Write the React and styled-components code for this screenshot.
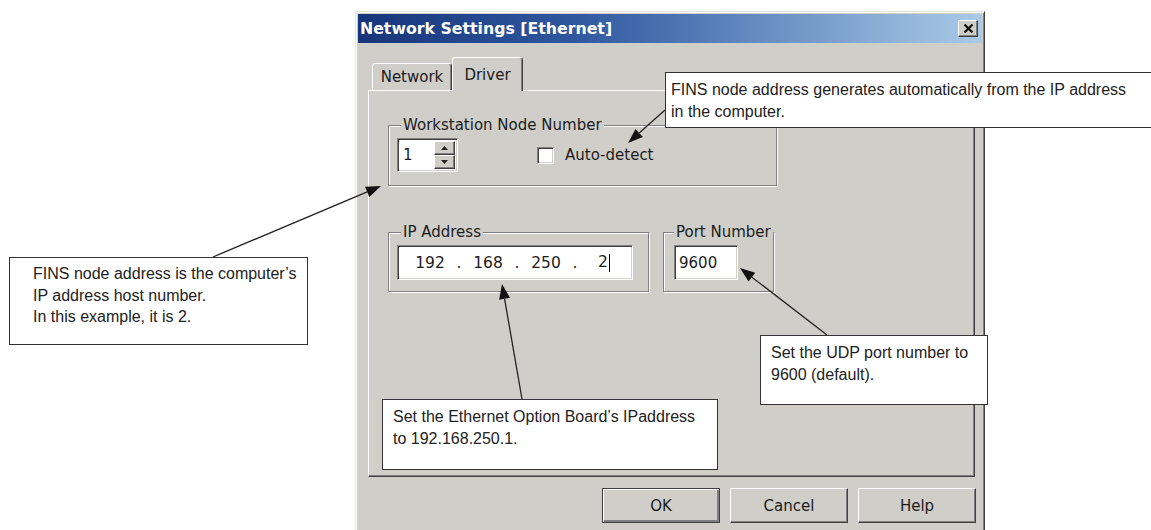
import React from 'react';
import styled, { createGlobalStyle } from 'styled-components';

const face = '#d0cec9';
const uiFont = `"DejaVu Sans", Tahoma, Verdana, sans-serif`;
const noteFont = `"Liberation Sans", Arial, Helvetica, sans-serif`;

const GlobalStyle = createGlobalStyle`
    html, body {
        margin: 0;
        padding: 0;
        background: #fff;
        overflow: hidden;
    }
    * {
        box-sizing: border-box;
    }
`;

const Page = styled.div`
    position: relative;
    width: 1151px;
    height: 530px;
    overflow: hidden;
    padding: 11px 0 0 355px;
    font-family: ${uiFont};
    color: #1c1c1c;
`;

const Dialog = styled.div`
    width: 630px;
    height: 545px;
    background: ${face};
    border: 1px solid;
    border-color: #e4e2de #404040 #404040 #e4e2de;
    box-shadow: inset 1px 1px 0 #fff, inset -1px -1px 0 #808080;
    padding: 2px;
    display: flex;
    flex-direction: column;
`;

const TitleBar = styled.div`
    height: 29px;
    flex-shrink: 0;
    display: flex;
    align-items: center;
    justify-content: space-between;
    padding: 0 4px 0 2px;
    background: linear-gradient(to right, #17357a 0%, #2f58a0 35%, #a9cbe8 100%);
    color: #fff;
    font-weight: bold;
    font-size: 15.75px;
`;

const CloseButton = styled.div`
    width: 20px;
    height: 17px;
    display: flex;
    align-items: center;
    justify-content: center;
    background: ${face};
    border: 1px solid;
    border-color: #fff #404040 #404040 #fff;
    box-shadow: inset -1px -1px 0 #808080;
`;

const Body = styled.div`
    padding: 14px 7px 0 10px;
    display: flex;
    flex-direction: column;
`;

const TabStrip = styled.div`
    display: flex;
    align-items: flex-end;
    height: 34px;
    padding-left: 4px;
    margin-bottom: -1px;
    position: relative;
    z-index: 1;
`;

const Tab = styled.div`
    width: ${p => p.$w}px;
    height: ${p => (p.$active ? 34 : 27)}px;
    margin-bottom: ${p => (p.$active ? 0 : 1)}px;
    display: flex;
    align-items: center;
    justify-content: center;
    font-size: 15px;
    background: ${face};
    border: 1px solid;
    border-color: #fff #404040 transparent #fff;
    border-bottom: none;
    border-radius: 3px 3px 0 0;
    box-shadow: inset -1px 0 0 #808080;
`;

const Panel = styled.div`
    width: 607px;
    height: 387px;
    border: 1px solid;
    border-color: #fff #404040 #404040 #fff;
    box-shadow: inset -1px -1px 0 #808080;
    padding: 25px 0 0 19px;
`;

const Group = styled.fieldset`
    margin: 0;
    min-width: 0;
    width: ${p => p.$w}px;
    border: 1px solid #808080;
    box-shadow: inset 1px 1px 0 #fff, 1px 1px 0 #fff;
    padding: 4px 8px ${p => p.$bottom}px ${p => p.$left}px;
`;

const Legend = styled.legend`
    margin-left: ${p => p.$shift}px;
    padding: 0 2px;
    background: ${face};
    font-size: 15px;
    line-height: 18px;
    white-space: nowrap;
`;

const Row = styled.div`
    display: flex;
    align-items: center;
`;

const FieldRow = styled.div`
    display: flex;
    align-items: flex-start;
    gap: 14px;
    margin-top: 37px;
`;

const Sunken = styled.div`
    width: ${p => p.$w}px;
    height: ${p => p.$h}px;
    background: #fff;
    border: 1px solid;
    border-color: #808080 #fff #fff #808080;
    box-shadow: inset 1px 1px 0 #404040, inset -1px -1px 0 #d4d0c8;
    display: flex;
    align-items: center;
    font-size: 15px;
`;

const SpinValue = styled.div`
    flex: 1;
    padding-left: 5px;
`;

const SpinColumn = styled.div`
    width: 23px;
    height: 100%;
    padding: 2px 2px 2px 0;
    display: flex;
    flex-direction: column;
`;

const SpinButton = styled.div`
    flex: 1;
    display: flex;
    align-items: center;
    justify-content: center;
    background: ${face};
    border: 1px solid;
    border-color: #fff #404040 #404040 #fff;
    box-shadow: inset -1px -1px 0 #808080;
`;

const CheckLabel = styled.label`
    display: flex;
    align-items: center;
    gap: 11px;
    margin-left: 79px;
    font-size: 15px;
`;

const CheckBox = styled.span`
    width: 17px;
    height: 17px;
    background: #fff;
    border: 1px solid;
    border-color: #808080 #fff #fff #808080;
    box-shadow: inset 1px 1px 0 #404040, inset -1px -1px 0 #d4d0c8;
`;

const IpLead = styled.span`
    width: 10px;
`;

const IpCell = styled.span`
    width: ${p => (p.$dot ? 14 : 44)}px;
    text-align: center;
    white-space: nowrap;
    font-size: 15.5px;
`;

const Caret = styled.span`
    display: inline-block;
    width: 1px;
    height: 18px;
    margin-left: 1px;
    background: #000;
    vertical-align: middle;
`;

const PortValue = styled.div`
    padding-left: 4px;
`;

const ButtonRow = styled.div`
    display: flex;
    justify-content: flex-end;
    gap: 10px;
    margin-top: 11px;
    width: 608px;
`;

const Button = styled.div`
    width: 118px;
    height: 35px;
    display: flex;
    align-items: center;
    justify-content: center;
    font-size: 15px;
    background: ${face};
    border: 1px solid;
    border-color: ${p => (p.$default ? '#404040' : '#fff #404040 #404040 #fff')};
    box-shadow: ${p =>
        p.$default
            ? 'inset 1px 1px 0 #fff, inset -2px -2px 0 #808080'
            : 'inset -1px -1px 0 #808080'};
`;

const Callout = styled.div`
    position: absolute;
    left: ${p => p.$x}px;
    top: ${p => p.$y}px;
    width: ${p => p.$w}px;
    height: ${p => p.$h}px;
    padding: ${p => p.$pad};
    background: #fff;
    border: 1.5px solid #333;
    font-family: ${noteFont};
    font-size: 16px;
    line-height: 21.5px;
    color: #222;
`;

const Overlay = styled.svg`
    position: absolute;
    left: 0;
    top: 0;
    pointer-events: none;
`;

const Arrow = ({ from, to }) => {
    const [x1, y1] = from;
    const [x2, y2] = to;
    const len = Math.hypot(x2 - x1, y2 - y1);
    const ux = (x2 - x1) / len;
    const uy = (y2 - y1) / len;
    const bx = x2 - ux * 15;
    const by = y2 - uy * 15;
    const hw = 5.5;
    const head = `${x2},${y2} ${bx - uy * hw},${by + ux * hw} ${bx + uy * hw},${by - ux * hw}`;
    return (
        <g>
            <line x1={x1} y1={y1} x2={bx} y2={by} stroke="#222" strokeWidth="1.3" />
            <polygon points={head} fill="#111" />
        </g>
    );
};

const Triangle = ({ down }) => (
    <svg width="7" height="4" viewBox="0 0 7 4">
        <polygon points={down ? '0,0 7,0 3.5,4' : '0,4 7,4 3.5,0'} fill="#222" />
    </svg>
);

const App = () => (
    <Page>
        <GlobalStyle />
        <Dialog>
            <TitleBar>
                <span>Network Settings [Ethernet]</span>
                <CloseButton>
                    <svg width="11" height="9" viewBox="0 0 11 9">
                        <path d="M1.5 0.5 L9.5 8.5 M9.5 0.5 L1.5 8.5" stroke="#111" strokeWidth="2.2" />
                    </svg>
                </CloseButton>
            </TitleBar>
            <Body>
                <TabStrip>
                    <Tab $w={80}>Network</Tab>
                    <Tab $w={71} $active>Driver</Tab>
                </TabStrip>
                <Panel>
                    <Group $w={389} $left={8} $bottom={13}>
                        <Legend $shift={4}>Workstation Node Number</Legend>
                        <Row>
                            <Sunken $w={61} $h={34}>
                                <SpinValue>1</SpinValue>
                                <SpinColumn>
                                    <SpinButton><Triangle /></SpinButton>
                                    <SpinButton><Triangle down /></SpinButton>
                                </SpinColumn>
                            </Sunken>
                            <CheckLabel>
                                <CheckBox />
                                Auto-detect
                            </CheckLabel>
                        </Row>
                    </Group>
                    <FieldRow>
                        <Group $w={261} $left={8} $bottom={11}>
                            <Legend $shift={4}>IP Address</Legend>
                            <Sunken $w={236} $h={35}>
                                <IpLead />
                                <IpCell>192</IpCell>
                                <IpCell $dot>.</IpCell>
                                <IpCell>168</IpCell>
                                <IpCell $dot>.</IpCell>
                                <IpCell>250</IpCell>
                                <IpCell $dot>.</IpCell>
                                <IpCell>2<Caret /></IpCell>
                            </Sunken>
                        </Group>
                        <Group $w={111} $left={10} $bottom={11}>
                            <Legend $shift={0}>Port Number</Legend>
                            <Sunken $w={64} $h={35}>
                                <PortValue>9600</PortValue>
                            </Sunken>
                        </Group>
                    </FieldRow>
                </Panel>
                <ButtonRow>
                    <Button $default>OK</Button>
                    <Button>Cancel</Button>
                    <Button>Help</Button>
                </ButtonRow>
            </Body>
        </Dialog>

        <Callout $x={665} $y={72} $w={500} $h={56} $pad="6px 0 0 5px">
            FINS node address generates automatically from the IP address
            <br />
            in the computer.
        </Callout>
        <Callout $x={9} $y={257} $w={299} $h={88} $pad="5px 0 0 23px">
            FINS node address is the computer’s
            <br />
            IP address host number.
            <br />
            In this example, it is 2.
        </Callout>
        <Callout $x={382} $y={399} $w={336} $h={71} $pad="6px 0 0 10px">
            Set the Ethernet Option Board’s IPaddress
            <br />
            to 192.168.250.1.
        </Callout>
        <Callout $x={760} $y={335} $w={228} $h={70} $pad="6px 0 0 10px">
            Set the UDP port number to
            <br />
            9600 (default).
        </Callout>

        <Overlay width="1151" height="530" viewBox="0 0 1151 530">
            <Arrow from={[665, 110]} to={[628, 143]} />
            <Arrow from={[213, 257]} to={[381, 186]} />
            <Arrow from={[522, 399]} to={[502, 284]} />
            <Arrow from={[827, 335]} to={[740, 268]} />
        </Overlay>
    </Page>
);

export default App;
